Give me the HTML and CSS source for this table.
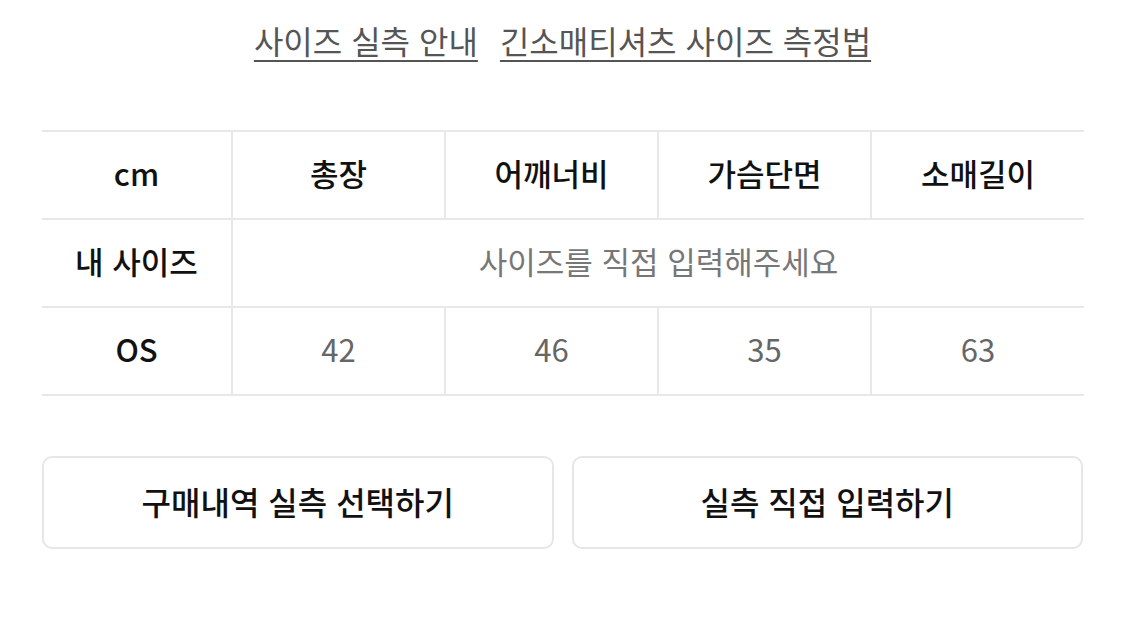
FILE: index.html
```html
<!DOCTYPE html>
<html lang="ko">
<head>
<meta charset="utf-8">
<link rel="stylesheet" href="styles.css">
</head>
<body>
<div class="page">
  <nav class="links">
    <a class="link" href="#">사이즈 실측 안내</a>
    <a class="link" href="#">긴소매티셔츠 사이즈 측정법</a>
  </nav>
  <table class="size-table">
    <colgroup>
      <col class="c-first"><col class="c-col"><col class="c-col"><col class="c-col"><col class="c-col">
    </colgroup>
    <tr class="head">
      <th class="label">cm</th>
      <th>총장</th>
      <th>어깨너비</th>
      <th>가슴단면</th>
      <th>소매길이</th>
    </tr>
    <tr>
      <th class="label">내 사이즈</th>
      <td class="hint" colspan="4">사이즈를 직접 입력해주세요</td>
    </tr>
    <tr>
      <th class="label">OS</th>
      <td>42</td>
      <td>46</td>
      <td>35</td>
      <td>63</td>
    </tr>
  </table>
  <div class="actions">
    <button class="btn">구매내역 실측 선택하기</button>
    <button class="btn">실측 직접 입력하기</button>
  </div>
</div>
</body>
</html>
```

FILE: styles.css
```css
* { box-sizing: border-box; }
html, body { margin: 0; padding: 0; background: #fff; }
body {
  font-family: "Noto Sans CJK KR", "Noto Sans", sans-serif;
  color: #111;
}
.page {
  padding: 16px 42px 0 42px;
}
.links {
  display: flex;
  justify-content: center;
  gap: 22px;
  height: 48px;
  align-items: center;
}
.link {
  font-size: 32px;
  line-height: 48px;
  color: #555;
  text-decoration: underline;
  text-decoration-thickness: 2px;
  text-underline-offset: 6px;
  text-decoration-color: #555;
}
.size-table {
  margin-top: 66px;
  width: 1041px;
  border-collapse: collapse;
  table-layout: fixed;
}
.c-first { width: 190px; }
.c-col { width: 213px; }
.size-table th,
.size-table td {
  border: 2px solid #e8e8e8;
  height: 88px;
  padding: 0 0 6px 0;
  text-align: center;
  vertical-align: middle;
  font-size: 31px;
  line-height: 1;
}
.size-table tr > :first-child { border-left: none; }
.size-table tr > :last-child { border-right: none; }
.size-table th {
  font-weight: 500;
  color: #111;
}
.size-table td {
  color: #666;
  font-weight: 400;
}
.size-table td.hint {
  color: #777;
}
.actions {
  display: flex;
  gap: 18px;
  margin-top: 60px;
}
.btn {
  flex: 1;
  height: 93px;
  background: #fff;
  border: 2px solid #e6e6e6;
  border-radius: 10px;
  font-family: inherit;
  font-size: 32px;
  font-weight: 500;
  color: #111;
  padding: 0 0 4px 0;
}
```
